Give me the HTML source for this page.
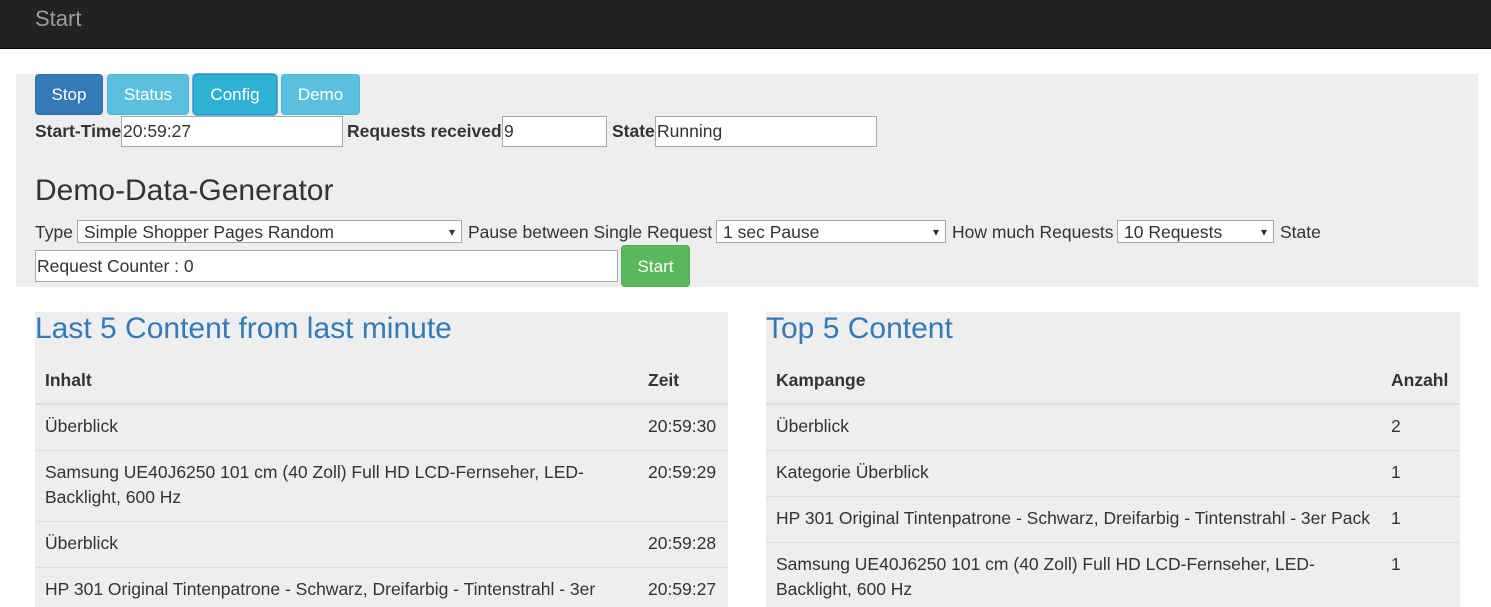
<!DOCTYPE html>
<html><head><meta charset="utf-8"><style>
*{box-sizing:border-box;margin:0;padding:0}
body{width:1491px;height:607px;overflow:hidden;background:#fff;font-family:"Liberation Sans",Arial,sans-serif;color:#333;font-size:17.5px;position:relative}
.a{position:absolute;white-space:nowrap}
.nav{left:0;top:0;width:1491px;height:49px;background:#222;border-bottom:1px solid #080808}
.btn{position:absolute;top:74px;height:41px;border-radius:4px;color:#fff;font-size:17px;text-align:center;line-height:40px}
.inp{position:absolute;background:#fff;border:1px solid #aaa;font-size:17.5px;padding-left:1px;line-height:29px;height:31px}
.sel{position:absolute;background:#fff;border:1px solid #aaa;font-size:17.5px;padding-left:6px;height:23px;line-height:22px;top:220px}
.sel:after{content:"▾";position:absolute;right:6px;top:0;font-size:12px}
.panel{position:absolute;background:#eee}
.row{position:absolute;left:0;right:0;border-top:1px solid #ddd}
.c{position:absolute;line-height:25px;white-space:nowrap}
</style></head><body>
<div class="a nav"></div>
<div class="a" style="left:35px;top:6px;color:#9d9d9d;font-size:22px">Start</div>
<div class="panel" style="left:16px;top:74px;width:1462px;height:213px"></div>
<div class="btn" style="left:35px;width:68px;background:#337ab7;border:1px solid #2e6da4">Stop</div>
<div class="btn" style="left:107px;width:82px;background:#5bc0de;border:1px solid #46b8da">Status</div>
<div class="btn" style="left:193px;width:84px;background:#31b0d5;border:1px solid #269abc;box-shadow:0 0 0 1px #66afe9">Config</div>
<div class="btn" style="left:281px;width:79px;background:#5bc0de;border:1px solid #46b8da">Demo</div>
<div class="a" style="left:35px;top:121px;font-weight:bold">Start-Time</div>
<div class="inp" style="left:121px;top:116px;width:222px">20:59:27</div>
<div class="a" style="left:347px;top:121px;font-weight:bold">Requests received</div>
<div class="inp" style="left:502px;top:116px;width:105px">9</div>
<div class="a" style="left:612px;top:121px;font-weight:bold">State</div>
<div class="inp" style="left:655px;top:116px;width:222px">Running</div>
<div class="a" style="left:35px;top:174px;font-size:30px">Demo-Data-Generator</div>
<div class="a" style="left:35px;top:222px">Type</div>
<div class="sel" style="left:77px;width:385px">Simple Shopper Pages Random</div>
<div class="a" style="left:468px;top:222px">Pause between Single Request</div>
<div class="sel" style="left:716px;width:230px">1 sec Pause</div>
<div class="a" style="left:952px;top:222px">How much Requests</div>
<div class="sel" style="left:1117px;width:157px">10 Requests</div>
<div class="a" style="left:1280px;top:222px">State</div>
<div class="inp" style="left:35px;top:250px;width:583px;height:32px;line-height:31px">Request Counter : 0</div>
<div class="btn" style="left:621px;top:245px;width:69px;height:42px;line-height:41px;background:#5cb85c;border:1px solid #4cae4c">Start</div>

<div class="panel" style="left:35px;top:312px;width:693px;height:295px">
<div class="a" style="left:0;top:0;font-size:30px">&nbsp;</div>
<div class="a" style="left:0;top:0;font-size:30px;color:#337ab7">Last 5 Content from last minute</div>
<div class="c" style="left:10px;top:56px;font-weight:bold">Inhalt</div>
<div class="c" style="left:613px;top:56px;font-weight:bold">Zeit</div>
<div class="row" style="top:91px;border-top:2px solid #ddd"></div>
<div class="c" style="left:10px;top:102px">Überblick</div><div class="c" style="left:613px;top:102px">20:59:30</div>
<div class="row" style="top:138px"></div>
<div class="c" style="left:10px;top:148px">Samsung UE40J6250 101 cm (40 Zoll) Full HD LCD-Fernseher, LED-<br>Backlight, 600 Hz</div><div class="c" style="left:613px;top:148px">20:59:29</div>
<div class="row" style="top:209px"></div>
<div class="c" style="left:10px;top:219px">Überblick</div><div class="c" style="left:613px;top:219px">20:59:28</div>
<div class="row" style="top:255px"></div>
<div class="c" style="left:10px;top:265px">HP 301 Original Tintenpatrone - Schwarz, Dreifarbig - Tintenstrahl - 3er</div><div class="c" style="left:613px;top:265px">20:59:27</div>
</div>

<div class="panel" style="left:766px;top:312px;width:694px;height:295px">
<div class="a" style="left:0;top:0;font-size:30px;color:#337ab7">Top 5 Content</div>
<div class="c" style="left:10px;top:56px;font-weight:bold">Kampange</div>
<div class="c" style="left:625px;top:56px;font-weight:bold">Anzahl</div>
<div class="row" style="top:91px;border-top:2px solid #ddd"></div>
<div class="c" style="left:10px;top:102px">Überblick</div><div class="c" style="left:625px;top:102px">2</div>
<div class="row" style="top:138px"></div>
<div class="c" style="left:10px;top:148px">Kategorie Überblick</div><div class="c" style="left:625px;top:148px">1</div>
<div class="row" style="top:184px"></div>
<div class="c" style="left:10px;top:194px">HP 301 Original Tintenpatrone - Schwarz, Dreifarbig - Tintenstrahl - 3er Pack</div><div class="c" style="left:625px;top:194px">1</div>
<div class="row" style="top:230px"></div>
<div class="c" style="left:10px;top:240px">Samsung UE40J6250 101 cm (40 Zoll) Full HD LCD-Fernseher, LED-<br>Backlight, 600 Hz</div><div class="c" style="left:625px;top:240px">1</div>
</div>
</body></html>
